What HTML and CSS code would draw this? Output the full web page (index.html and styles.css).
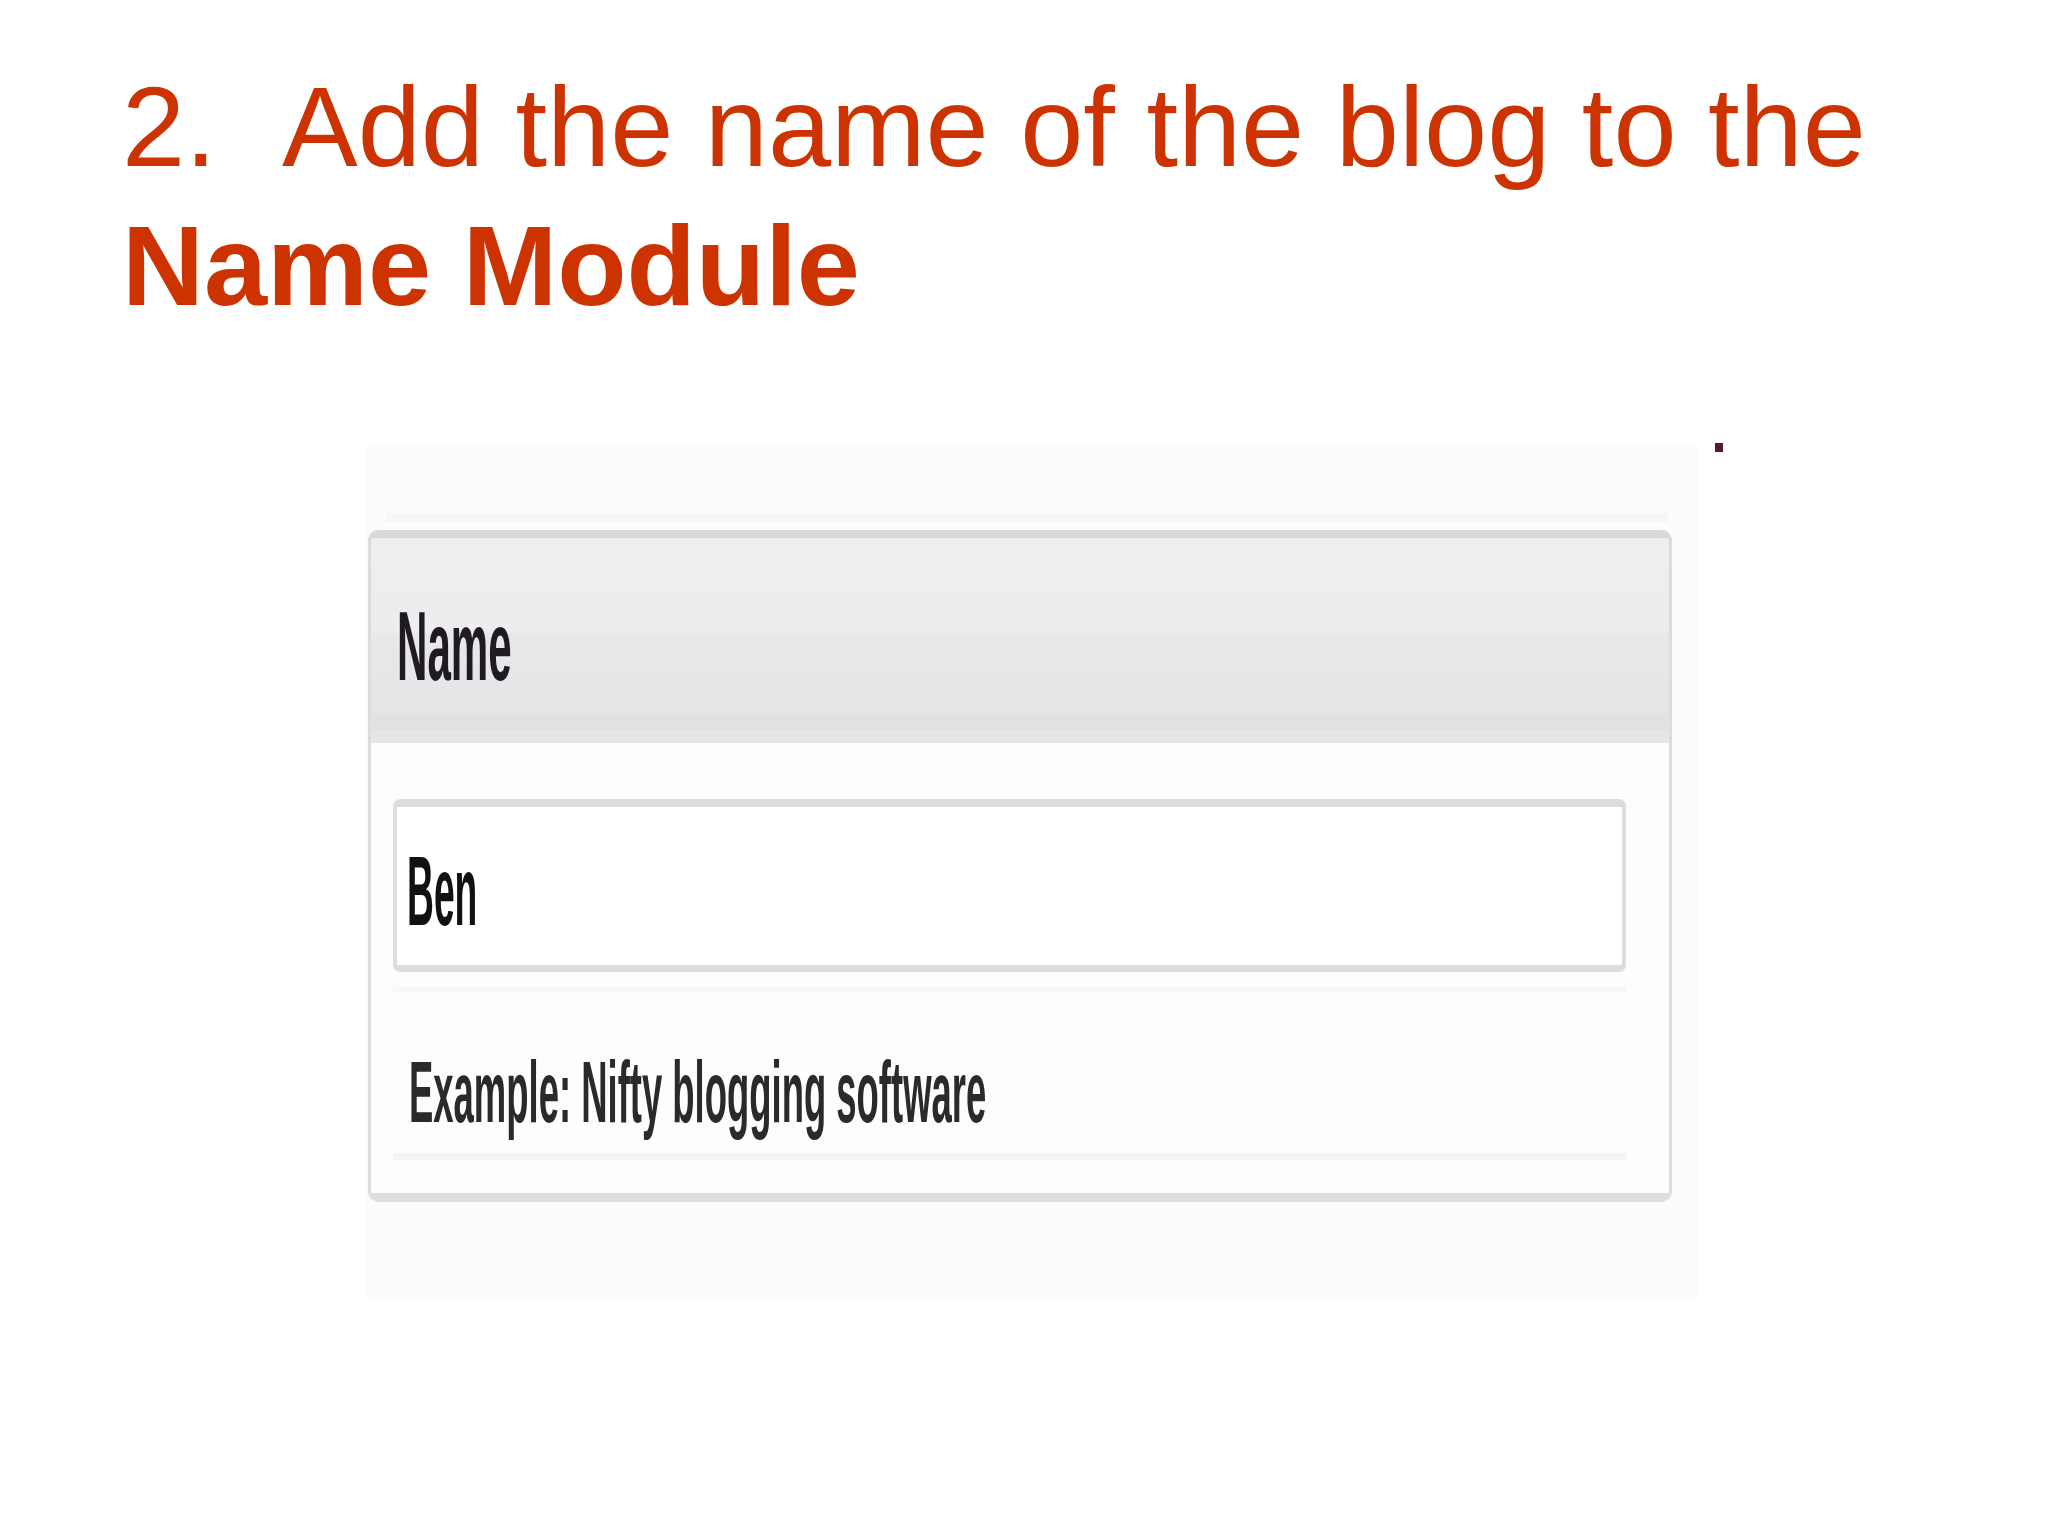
FILE: index.html
```html
<!DOCTYPE html>
<html lang="en">
<head>
<meta charset="utf-8">
<title>Add the name of the blog</title>
<link rel="stylesheet" href="styles.css">
</head>
<body>
<h1 class="title"><span class="num">2.</span>Add the name of the blog to the<br><strong class="title-strong">Name Module</strong></h1>

<div class="shot">
  <span class="dot"></span>
  <div class="ghost-line"></div>
  <div class="card">
    <div class="card-head">
      <span class="sq sq-name">Name</span>
    </div>
    <div class="card-body">
      <div class="input">
        <span class="sq sq-ben">Ben</span>
      </div>
      <div class="helper">
        <span class="sq sq-help">Example: Nifty blogging software</span>
      </div>
    </div>
  </div>
</div>
</body>
</html>
```

FILE: styles.css
```css
html, body {
  margin: 0;
  padding: 0;
  background: #ffffff;
}

body {
  width: 2048px;
  height: 1536px;
  overflow: hidden;
  font-family: "Liberation Sans", Arial, sans-serif;
}

.title {
  margin: 57px 0 0 122px;
  font-size: 113.5px;
  line-height: 139px;
  font-weight: normal;
  color: #cc3300;
  white-space: nowrap;
}

.num {
  display: inline-block;
  width: 160px;
}

.title-strong {
  font-weight: bold;
}

.shot {
  position: relative;
  margin: 109px 0 0 366px;
  width: 1332px;
  height: 858px;
  box-sizing: border-box;
  padding: 86px 0 0 2px;
  background: #fdfbfd;
}

.dot {
  position: absolute;
  left: 1349px;
  top: -1px;
  width: 8px;
  height: 9px;
  background: #5a1634;
}

.ghost-line {
  position: absolute;
  left: 20px;
  top: 69px;
  width: 1282px;
  height: 9px;
  background: #f6f5f7;
}

.card {
  position: relative;
  width: 1304px;
  height: 672px;
  box-sizing: border-box;
  border-style: solid;
  border-color: #dcdbdd;
  border-width: 8px 3px 9px 3px;
  border-top-color: #d9d8da;
  border-bottom-color: #dfdee0;
  border-radius: 10px;
  background: #fefdfe;
  overflow: hidden;
}

.card-head {
  height: 205px;
  box-sizing: border-box;
  padding: 59px 0 0 26px;
  background: linear-gradient(to bottom,
    #eeedef 0px, #edecee 95px,
    #e8e7e9 95px, #e6e5e7 175px,
    #e1e0e2 175px, #e1e0e2 192px,
    #e6e5e7 192px, #e6e5e7 205px);
}

.sq {
  display: inline-block;
  white-space: nowrap;
  transform-origin: 0 50%;
  font-weight: bold;
}

.sq-name {
  font-size: 98px;
  line-height: 98px;
  color: #1f1b21;
  transform: scaleX(0.43);
}

.card-body {
  height: 450px;
  box-sizing: border-box;
  padding: 56px 43px 33px 22px;
  background: #fefdfe;
}

.input {
  height: 173px;
  box-sizing: border-box;
  border-style: solid;
  border-color: #dddcde;
  border-width: 8px 4px 7px 4px;
  border-radius: 7px;
  background: #ffffff;
  padding: 35px 0 0 10px;
}

.sq-ben {
  font-size: 98px;
  line-height: 98px;
  color: #111111;
  transform: scaleX(0.38);
}

.helper {
  margin-top: 15px;
  border-top: 5px solid #f7f6f8;
  border-bottom: 7px solid #f4f3f5;
  padding: 56px 0 18px 16px;
}

.sq-help {
  font-size: 87px;
  line-height: 87px;
  color: #2a292b;
  transform: scaleX(0.419);
}
```
